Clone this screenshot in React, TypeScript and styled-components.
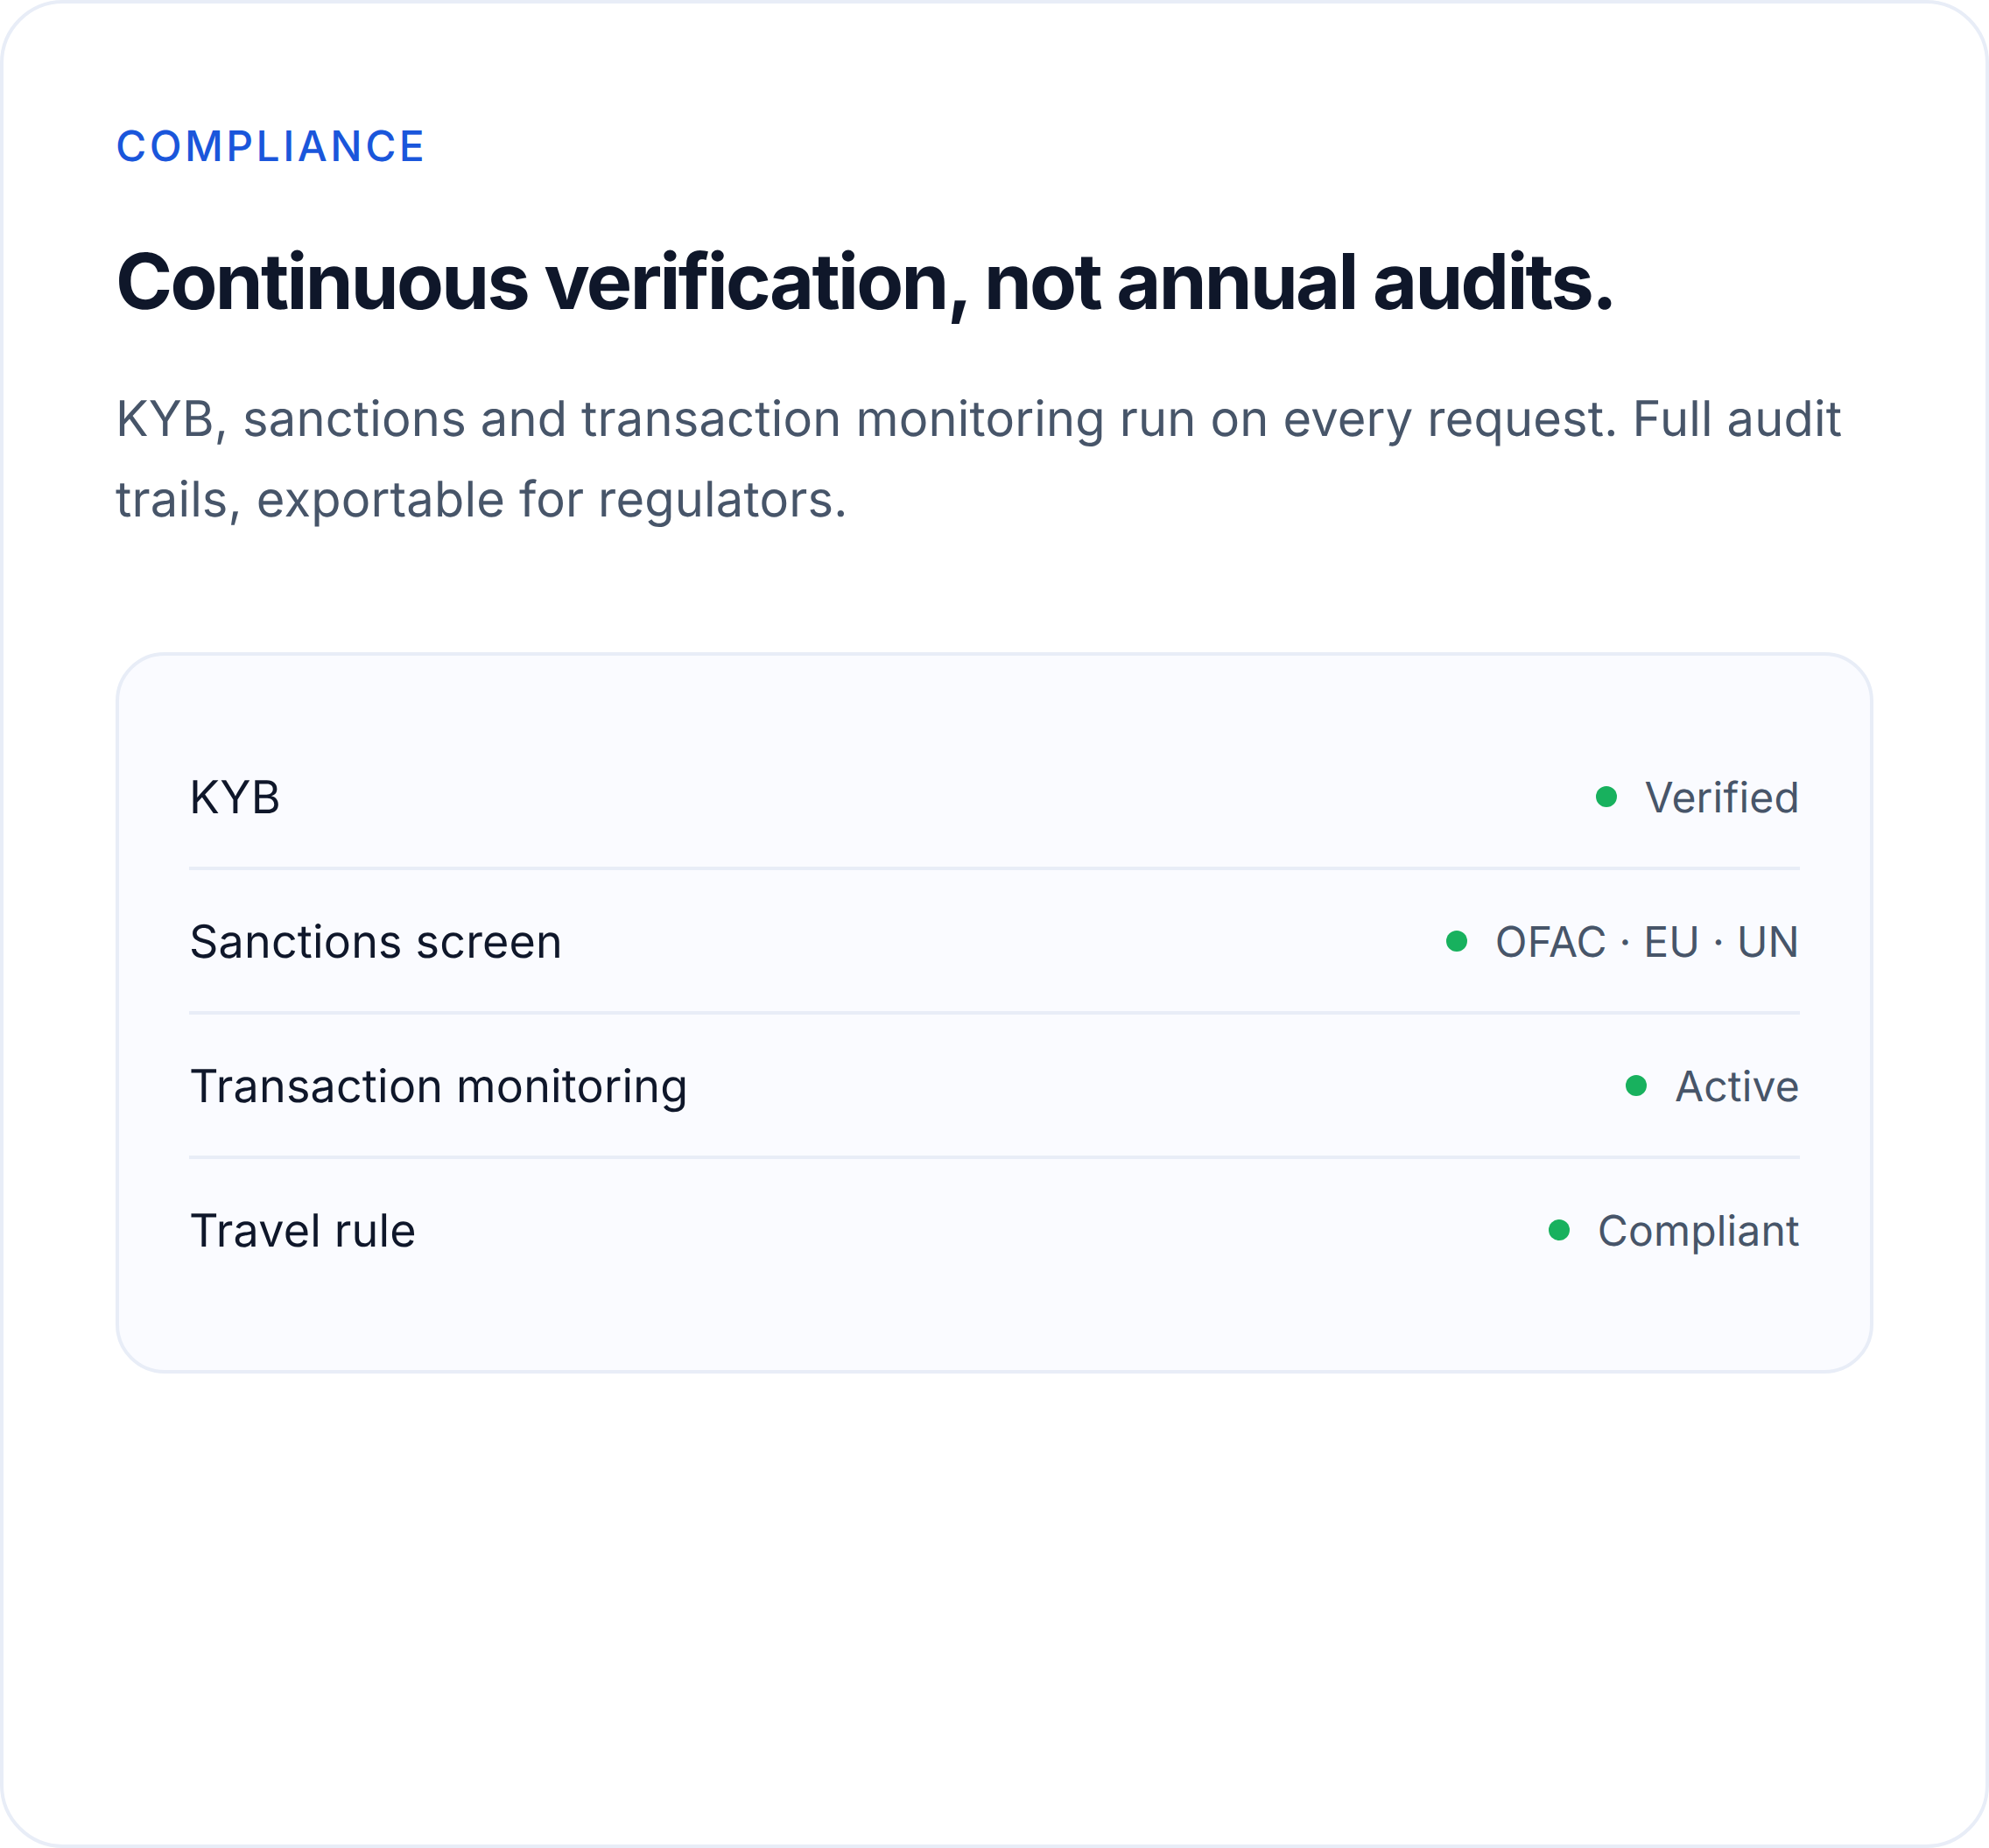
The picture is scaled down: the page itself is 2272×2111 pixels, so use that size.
import React from "react";
import styled, { createGlobalStyle } from "styled-components";

const Global = createGlobalStyle`
  html, body { margin: 0; padding: 0; background: #fff; }
  body { font-family: Inter, "Liberation Sans", sans-serif; text-rendering: geometricPrecision; -webkit-font-smoothing: antialiased; }
`;

const Card = styled.section`
  box-sizing: border-box;
  width: 2272px;
  height: 2111px;
  padding: 128px;
  background: #fff;
  border: 4px solid #e8edf7;
  border-radius: 72px;
`;

const Eyebrow = styled.div`
  font-size: 48px;
  line-height: 70px;
  font-weight: 500;
  letter-spacing: 3.5px;
  font-variation-settings: "opsz" 14;
  color: #1a56db;
`;

const Title = styled.h2`
  margin: 68px 0 0;
  font-size: 88px;
  line-height: 105.6px;
  font-weight: 700;
  letter-spacing: -2.64px;
  font-variation-settings: "opsz" 22;
  color: #0f172a;
`;

const Lead = styled.p`
  margin: 56px 0 0;
  font-size: 56px;
  line-height: 92.8px;
  font-weight: 400;
  letter-spacing: 0.18px;
  font-variation-settings: "opsz" 14;
  color: #475569;
`;

const Panel = styled.div`
  box-sizing: border-box;
  margin-top: 128px;
  padding: 80px;
  background: #fafbff;
  border: 4px solid #e8edf7;
  border-radius: 56px;
`;

const Row = styled.div`
  display: flex;
  align-items: center;
  justify-content: space-between;
  padding: 41px 0 39px;
  line-height: 81px;
  & + & { border-top: 4px solid #e8edf7; }
`;

const Name = styled.span`
  font-size: 52px;
  letter-spacing: 0.2px;
  font-variation-settings: "opsz" 14;
  color: #0f172a;
`;

const Status = styled.span`
  display: flex;
  align-items: center;
  gap: 32px;
  font-size: 48px;
  letter-spacing: 0.2px;
  font-variation-settings: "opsz" 14;
  color: #475569;
`;

const Dot = styled.i`
  display: block;
  width: 24px;
  height: 24px;
  margin-top: -2px;
  border-radius: 50%;
  background: #18b15e;
`;

const rows = [
  ["KYB", "Verified"],
  ["Sanctions screen", "OFAC · EU · UN"],
  ["Transaction monitoring", "Active"],
  ["Travel rule", "Compliant"],
];

export default function App() {
  return (
    <>
      <Global />
      <Card>
        <Eyebrow>COMPLIANCE</Eyebrow>
        <Title>Continuous verification, not annual audits.</Title>
        <Lead>KYB, sanctions and transaction monitoring run on every request. Full audit trails, exportable for regulators.</Lead>
        <Panel>
          {rows.map(([n, s]) => (
            <Row key={n}>
              <Name>{n}</Name>
              <Status><Dot />{s}</Status>
            </Row>
          ))}
        </Panel>
      </Card>
    </>
  );
}
